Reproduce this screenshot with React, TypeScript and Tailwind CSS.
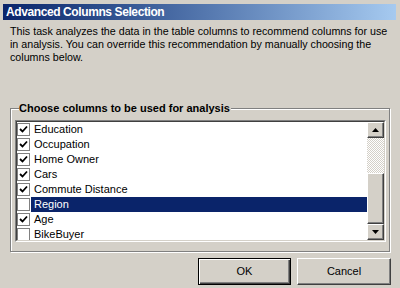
import React from "react";

const items = [
  { label: "Education", checked: true },
  { label: "Occupation", checked: true },
  { label: "Home Owner", checked: true },
  { label: "Cars", checked: true },
  { label: "Commute Distance", checked: true },
  { label: "Region", checked: false, selected: true },
  { label: "Age", checked: true },
  { label: "BikeBuyer", checked: false },
];

const Check = ({ on }: { on: boolean }) => (
  <span className="flex h-[13px] w-[13px] shrink-0 items-center justify-center border border-[#808080] bg-white">
    {on && (
      <svg width="9" height="9" viewBox="0 0 9 9">
        <path d="M1 4 L3.5 6.5 L8 1.5" stroke="#000" strokeWidth="1.8" fill="none" />
      </svg>
    )}
  </span>
);

const Arrow = ({ up }: { up?: boolean }) => (
  <div className="flex h-[16px] w-[17px] items-center justify-center border border-t-white border-l-white border-r-[#404040] border-b-[#404040] bg-[#d4d0c8] shadow-[inset_-1px_-1px_0_#808080]">
    <svg width="7" height="4" viewBox="0 0 7 4">
      <path d={up ? "M0 4 L3.5 0 L7 4 Z" : "M0 0 L3.5 4 L7 0 Z"} fill="#000" />
    </svg>
  </div>
);

export default function App() {
  return (
    <div
      className="flex h-[288px] w-[400px] flex-col bg-[#d4d0c8] pl-[3px] pr-[4px] pt-[4px] text-[11px] text-black"
      style={{ fontFamily: "Tahoma, 'Liberation Sans', sans-serif" }}
    >
      <div className="flex h-[16px] items-center bg-gradient-to-r from-[#0a246a] to-[#a6caf0] pl-[3px] text-[12px] font-bold leading-none tracking-[-0.4px] text-white">
        Advanced Columns Selection
      </div>
      <p className="pl-[7px] pr-[8px] pt-[5px] text-[10.7px] leading-[13px]">
        This task analyzes the data in the table columns to recommend columns for use in analysis. You can override this recommendation by manually choosing the columns below.
      </p>
      <div className="relative ml-[7px] mr-[6px] mt-[44px] h-[144px] border border-[#808080] shadow-[1px_1px_0_#fff,inset_1px_1px_0_#fff]">
        <span className="absolute left-[8px] top-[-9px] bg-[#d4d0c8] pr-[1px] text-[11px] font-bold leading-[16px]">
          Choose columns to be used for analysis
        </span>
        <div className="ml-[4px] mr-[3px] mt-[11px] flex h-[122px] border border-t-[#808080] border-l-[#808080] border-b-white border-r-white">
          <div className="flex flex-1 overflow-hidden border border-t-[#404040] border-l-[#404040] border-b-[#d4d0c8] border-r-[#d4d0c8] bg-white">
            <div className="flex-1">
              {items.map((it) => (
                <div key={it.label} className="flex h-[15px] items-center">
                  <Check on={it.checked} />
                  <span
                    className={`ml-[1px] flex h-[15px] flex-1 items-center pl-[3px] leading-none ${
                      it.selected ? "bg-[#0a246a] text-white" : ""
                    }`}
                  >
                    {it.label}
                  </span>
                </div>
              ))}
            </div>
            <div className="flex w-[17px] flex-col bg-[repeating-conic-gradient(#d4d0c8_0_25%,#fff_0_50%)] bg-[length:2px_2px]">
              <Arrow up />
              <div className="h-[35px]" />
              <div className="h-[52px] border border-t-white border-l-white border-r-[#404040] border-b-[#404040] bg-[#d4d0c8] shadow-[inset_-1px_-1px_0_#808080]" />
              <div className="flex-1" />
              <Arrow />
            </div>
          </div>
        </div>
      </div>
      <div className="mt-[6px] flex justify-end gap-[6px] pr-[5px]">
        <button className="h-[27px] w-[93px] border border-black bg-[#d4d0c8] shadow-[inset_1px_1px_0_#fff,inset_-1px_-1px_0_#404040,inset_-2px_-2px_0_#808080]">
          OK
        </button>
        <button className="h-[27px] w-[94px] border border-t-white border-l-white border-b-[#404040] border-r-[#404040] bg-[#d4d0c8] shadow-[inset_-1px_-1px_0_#808080]">
          Cancel
        </button>
      </div>
    </div>
  );
}
